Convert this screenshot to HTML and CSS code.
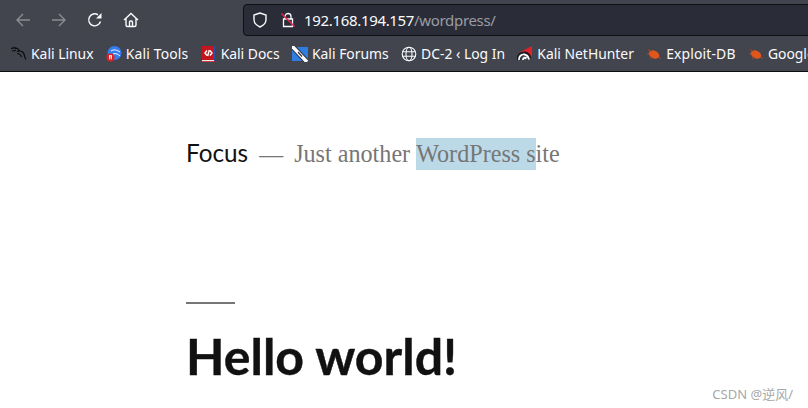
FILE: index.html
```html
<!DOCTYPE html>
<html lang="en">
<head>
<meta charset="utf-8">
<title>Focus</title>
<link rel="stylesheet" href="styles.css">
</head>
<body>
<header class="chrome">
  <div class="navbar">
    <div class="nav-buttons">
      <svg class="nav-icon" viewBox="0 0 16 16"><path class="dim" d="M15 8H2M8 2 2 8l6 6"/></svg>
      <svg class="nav-icon" viewBox="0 0 16 16"><path class="dim" d="M1 8h13M8 2l6 6-6 6"/></svg>
      <svg class="nav-icon" viewBox="0 0 16 16"><path d="M13.500 9.500A6 6 0 1 1 11 2.800"/><path class="fill" d="M14.500 1v5.500H9z"/></svg>
      <svg class="nav-icon" viewBox="0 0 16 16"><path d="M1 8 8 1.500 15 8M3 6.500V13a1.500 1.500 0 0 0 1.500 1.500h7A1.500 1.500 0 0 0 13 13V6.500M6.500 14.500V10a1 1 0 0 1 1-1h1a1 1 0 0 1 1 1v4.500"/></svg>
    </div>
    <div class="urlbar">
      <svg class="shield" viewBox="0 0 16 16"><path d="M8 1 2 3v4.500c0 3.500 2.500 6 6 7.500 3.500-1.500 6-4 6-7.500V3z"/></svg>
      <svg class="lock" viewBox="0 0 16 16"><path d="M5 7V4.500a3 3 0 0 1 6 0V7M3.500 7h9v7.500h-9z"/><path class="strike" d="M1.500 1.500l13 13"/></svg>
      <span class="url">192.168.194.157<span class="url-path">/wordpress/</span></span>
    </div>
  </div>
  <nav class="bookmarks">
    <a class="bookmark"><svg class="fav" viewBox="0 0 16 16"><path class="kali" d="M0 2.500c3-1 5-1 7 .5 1.500 1 .5 2-1 2.500 3-1 6 0 7 2.500.7 2 .5 3.500 2 5.500M3 1l2 2M1 5l4-.5M6 7.500c2 0 4 1.500 4.500 3.500"/></svg>Kali Linux</a>
    <a class="bookmark wide"><svg class="fav" viewBox="0 0 16 16"><circle cx="8.500" cy="7" r="7" fill="#367bf0"/><path class="wave" d="M5 5c3-2 6-1 9 1M7 8c3-1 5 0 7 2"/><circle cx="4.500" cy="11.500" r="4" fill="#e02020"/><path class="wave" d="M3 9.800h3M3.700 9.800v3.500M5.300 9.800v3.500"/></svg>Kali Tools</a>
    <a class="bookmark"><svg class="fav" viewBox="0 0 16 16"><rect x="1" width="13" height="16" fill="#c4161c"/><rect x="12.500" width="1.500" height="15" fill="#2b4fa8"/><rect x="1" y="14" width="12" height="1.200" fill="#e8e8e8"/><path class="wave bold" d="M6 4.500 4 7l2 2.500M9 4.500 11 7 9 9.500M8.300 4 6.700 10"/></svg>Kali Docs</a>
    <a class="bookmark"><svg class="fav" viewBox="0 0 16 16"><rect y="1" width="16" height="14" fill="#2f7de1"/><path class="forum-out" d="M0 0l15 16"/><path class="forum" d="M0 0l15 16"/><path class="forum-in" d="M6 6l4 4.500"/></svg>Kali Forums</a>
    <a class="bookmark"><svg class="fav" viewBox="0 0 16 16"><g class="globe"><circle cx="8" cy="8" r="6.800"/><ellipse cx="8" cy="8" rx="3" ry="6.800"/><path d="M1.500 5.700h13M1.500 10.300h13"/></g></svg>DC-2 ‹ Log In</a>
    <a class="bookmark"><svg class="fav" viewBox="0 0 16 16"><path fill="#e0222c" d="M3 6 15 0v12l-3-3-3-1-3 1z"/><path class="hunter-dark" d="M1.500 14c-.5-4 3-7 6.500-6.500 2.500.5 4 2.500 4.500 5"/><path class="hunter" d="M2 14c-.5-3.500 2.500-6 5.500-5.500 2.500.5 4 2.500 4.500 5M6 14c0-2 2-3 3.500-1.500"/></svg>Kali NetHunter</a>
    <a class="bookmark wide"><svg class="fav" viewBox="0 0 16 16"><ellipse cx="8" cy="8.500" rx="5.500" ry="3.800" fill="#e2551b" transform="rotate(25 8 8.500)"/><path class="bug" d="M2 3.500l4 3M1 8h3M4 13l3-2M12 11.500l3 .5"/></svg>Exploit-DB</a>
    <a class="bookmark"><svg class="fav" viewBox="0 0 16 16"><ellipse cx="8" cy="8.500" rx="5.500" ry="3.800" fill="#e2551b" transform="rotate(25 8 8.500)"/><path class="bug" d="M2 3.500l4 3M1 8h3M4 13l3-2M12 11.500l3 .5"/></svg>Google Hacking DB</a>
  </nav>
</header>
<main class="page">
  <div class="site-brand">
    <span class="site-title">Focus</span>
    <span class="site-dash">—</span>
    <span class="site-tagline">Just another <span class="selected">WordPress s</span>ite</span>
  </div>
  <article class="post">
    <hr class="rule">
    <h1 class="post-title">Hello world!</h1>
  </article>
</main>
<div class="watermark">CSDN @逆风/</div>
</body>
</html>
```
FILE: styles.css
```css
* { box-sizing: border-box; }
html, body { margin: 0; height: 408px; overflow: hidden; background: #fff; }
body { position: relative; }

.chrome { height: 72px; background: #42454e; border-bottom: 1px solid #0c0c0d; overflow: hidden; }
.navbar { height: 36px; display: flex; align-items: flex-start; padding-top: 4px; }
.nav-buttons { flex: none; width: 243px; height: 32px; display: flex; align-items: center; padding-left: 15px; gap: 20px; }
.nav-icon { width: 16px; height: 16px; flex: none; fill: none; stroke: #fbfbfe; stroke-width: 1.4; }
.nav-icon .dim { stroke: #8a8c93; }
.nav-icon .fill { fill: #fbfbfe; stroke: none; }

.urlbar { flex: none; width: 580px; height: 32px; background: #2a2d38; border: 1px solid #0f1014; border-radius: 4px; display: flex; align-items: center; padding-left: 8px; }
.shield { width: 16px; height: 16px; fill: none; stroke: #fbfbfe; stroke-width: 1.4; flex: none; }
.lock { width: 16px; height: 16px; margin-left: 12px; fill: none; stroke: #fbfbfe; stroke-width: 1.3; flex: none; }
.lock .strike { stroke: #e22850; stroke-width: 1.5; }
.url { margin-left: 8px; font: 15px "Noto Sans", sans-serif; letter-spacing: -0.33px; color: #fbfbfe; white-space: nowrap; }
.url-path { color: #9a9ca3; }

.bookmarks { height: 35px; display: flex; align-items: center; padding-left: 11px; gap: 12.300px; white-space: nowrap; }
.bookmark { display: flex; align-items: center; gap: 4px; font: 13.900px "Noto Sans", sans-serif; color: #fbfbfe; flex: none; }
.wide { letter-spacing: 0.15px; }
.fav { width: 16px; height: 16px; flex: none; }
.kali { fill: none; stroke: #0c0c0d; stroke-width: 1.2; }
.wave { fill: none; stroke: #fff; stroke-width: 1; }
.bold { stroke-width: 1.4; }
.forum-out { fill: none; stroke: #30323a; stroke-width: 5.500; }
.forum { fill: none; stroke: #fff; stroke-width: 3.500; }
.forum-in { fill: none; stroke: #30323a; stroke-width: 1.2; }
.globe { fill: none; stroke: #fbfbfe; stroke-width: 1.1; }
.hunter-dark { fill: none; stroke: #1a1a1e; stroke-width: 4; }
.hunter { fill: none; stroke: #fff; stroke-width: 1.8; }
.bug { fill: none; stroke: #b4501f; stroke-width: 0.8; }

.page { padding: 66px 0 0 186px; }
.site-brand { display: flex; align-items: baseline; height: 30px; white-space: nowrap; }
.site-title { font: 400 24.300px Lato, sans-serif; color: #111; }
.site-dash { margin-left: 11px; font: 24px "Liberation Serif", serif; color: #767676; }
.site-tagline { margin-left: 11px; font: 24.150px "Liberation Serif", serif; color: #767676; }
.selected { background: #bcd9e8; display: inline-block; line-height: 32px; }

.post { padding-top: 134px; }
.rule { width: 49px; height: 2px; margin: 0; border: 0; background: #767676; }
.post-title { margin: 22px 0 0; font: 700 50px/60px Lato, sans-serif; color: #111; -webkit-text-stroke: 0.4px #111; }

.watermark { position: absolute; right: 15px; top: 384px; font: 13px "Noto Sans", "Noto Sans CJK SC", sans-serif; color: #a8a8a8; }
```
